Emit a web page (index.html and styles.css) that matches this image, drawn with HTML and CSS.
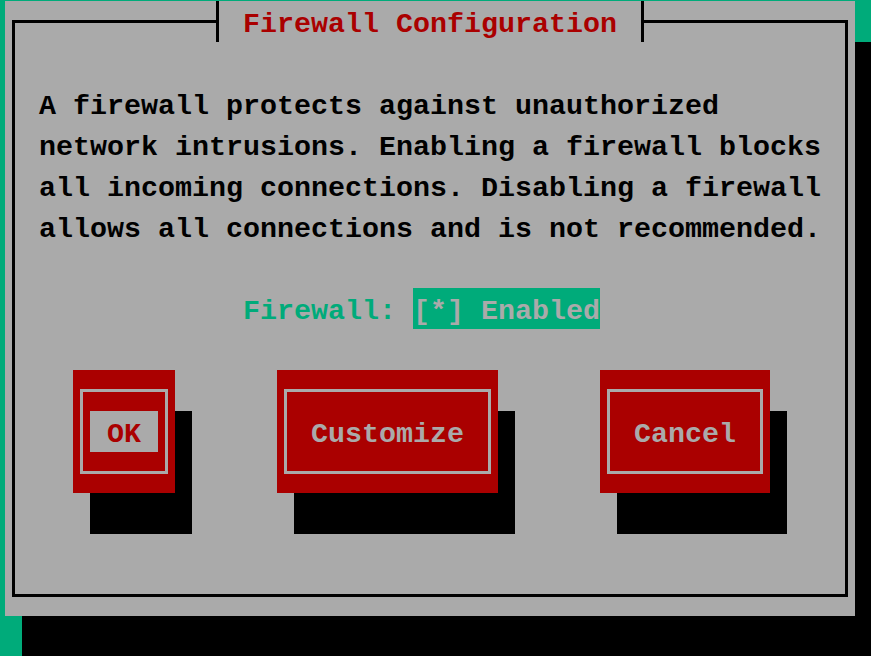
FILE: index.html
```html
<!DOCTYPE html>
<html>
<head>
    <title>Firewall Configuration</title>
    <link rel="stylesheet" href="styles.css">
</head>
<body>
    <div class="screen">
        <div class="dialog">
            <div class="frame">
                <div class="title">Firewall Configuration</div>
                <div class="message">A firewall protects against unauthorized network intrusions. Enabling a firewall blocks all incoming connections. Disabling a firewall allows all connections and is not recommended.</div>
                <div class="field">
                    <span class="field-label">Firewall:</span>
                    <span class="checkbox">[*] Enabled</span>
                </div>
                <div class="buttons">
                    <div class="button button-ok">
                        <div class="button-frame"><span class="button-label focused">OK</span></div>
                    </div>
                    <div class="button button-customize">
                        <div class="button-frame"><span class="button-label">Customize</span></div>
                    </div>
                    <div class="button button-cancel">
                        <div class="button-frame"><span class="button-label">Cancel</span></div>
                    </div>
                </div>
            </div>
        </div>
    </div>
</body>
</html>
```

FILE: styles.css
```css
body {
    margin: 0;
    padding: 0;
    font-family: "Liberation Mono", "DejaVu Sans Mono", monospace;
    font-weight: bold;
    font-size: 28.33px;
    line-height: 41px;
}

.screen {
    width: 871px;
    height: 656px;
    background-color: #00ab7a;
    overflow: hidden;
    padding-top: 1px;
    box-sizing: border-box;
}

.dialog {
    width: 850px;
    height: 615px;
    margin-left: 5px;
    background-color: #aaaaaa;
    box-shadow: 17px 41px 0 #000;
    padding: 19px 7px;
    box-sizing: border-box;
}

.frame {
    position: relative;
    height: 577px;
    border: 3px solid #000;
    box-sizing: border-box;
}

/* title sits over the top border line */
.title {
    position: absolute;
    top: -22px;
    left: 201px;
    height: 41px;
    line-height: 47px;
    padding: 0 24px;
    border-left: 3px solid #000;
    border-right: 3px solid #000;
    background-color: #aaaaaa;
    color: #aa0000;
    white-space: nowrap;
}

.message {
    margin-top: 60px;
    margin-left: 24px;
    padding-top: 3px;
    width: 783px;
    color: #000;
}

.field {
    display: flex;
    margin-top: 38px;
    padding-left: 228px;
    height: 41px;
    white-space: pre;
}

.field span {
    height: 41px;
    line-height: 47px;
}

.field-label {
    color: #00ab7a;
    margin-right: 17px;
}

.checkbox {
    background-color: #00ab7a;
    color: #aaaaaa;
}

.buttons {
    display: flex;
    gap: 102px;
    margin-top: 41px;
    padding-left: 58px;
}

.button {
    height: 123px;
    background-color: #aa0000;
    box-shadow: 17px 41px 0 #000;
    padding: 19px 7px;
    box-sizing: border-box;
}

.button-ok {
    width: 102px;
}

.button-customize {
    width: 221px;
}

.button-cancel {
    width: 170px;
}

.button-frame {
    height: 100%;
    border: 3px solid #aaaaaa;
    box-sizing: border-box;
    display: flex;
    align-items: center;
    justify-content: center;
}

.button-label {
    height: 41px;
    line-height: 47px;
    color: #aaaaaa;
}

.button-label.focused {
    background-color: #aaaaaa;
    color: #aa0000;
    padding: 0 17px;
}
```
